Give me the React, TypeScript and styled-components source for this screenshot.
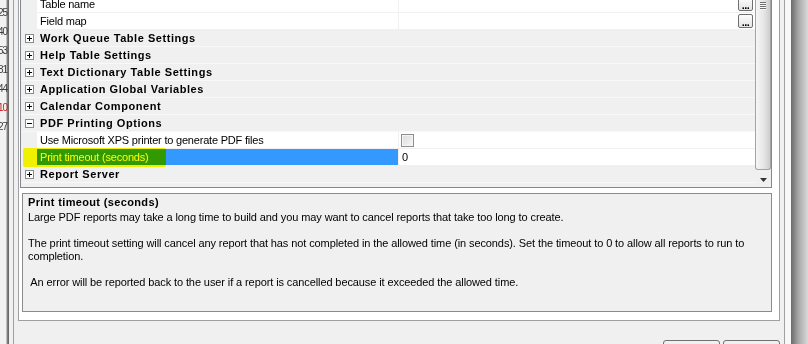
import styled, { createGlobalStyle } from 'styled-components';

const GlobalStyle = createGlobalStyle`
  html, body {
    margin: 0;
    padding: 0;
    width: 808px;
    height: 344px;
    overflow: hidden;
    background: #f0f0f0;
  }
  body {
    font-family: "Liberation Sans", Arial, sans-serif;
    font-size: 11px;
    color: #000;
  }
`;

type Row =
  | { kind: 'category'; name: string; open?: boolean }
  | {
      kind: 'property';
      name: string;
      value?: string;
      editor?: 'ellipsis' | 'checkbox';
      selected?: boolean;
      marked?: boolean;
    };

const ROWS: Row[] = [
  { kind: 'property', name: 'Table name', editor: 'ellipsis' },
  { kind: 'property', name: 'Field map', editor: 'ellipsis' },
  { kind: 'category', name: 'Work Queue Table Settings' },
  { kind: 'category', name: 'Help Table Settings' },
  { kind: 'category', name: 'Text Dictionary Table Settings' },
  { kind: 'category', name: 'Application Global Variables' },
  { kind: 'category', name: 'Calendar Component' },
  { kind: 'category', name: 'PDF Printing Options', open: true },
  { kind: 'property', name: 'Use Microsoft XPS printer to generate PDF files', editor: 'checkbox' },
  { kind: 'property', name: 'Print timeout (seconds)', value: '0', selected: true, marked: true },
  { kind: 'category', name: 'Report Server' },
];

const LINE_NUMBERS = ['25', '40', '53', '31', '44', '10', '27'];

function Expander({ open }: { open?: boolean }) {
  return (
    <ExpanderIcon width="9" height="9" viewBox="0 0 9 9">
      <rect x="0.5" y="0.5" width="8" height="8" fill="#fff" stroke="#8a8a8a" />
      <line x1="2" y1="4.5" x2="7" y2="4.5" stroke="#000" />
      {!open && <line x1="4.5" y1="2" x2="4.5" y2="7" stroke="#000" />}
    </ExpanderIcon>
  );
}

function App() {
  return (
    <>
      <GlobalStyle />
      <Screen>
        <EditorStrip>
          {LINE_NUMBERS.map((n) => (
            <LineNumber key={n} $red={n === '10'}>
              {n}
            </LineNumber>
          ))}
        </EditorStrip>

        <Dialog>
          <Panel>
            <Frame>
              <Grid>
                <GridBody>
                  <RowList>
                    {ROWS.map((row) =>
                      row.kind === 'category' ? (
                        <CategoryRow key={row.name}>
                          <MarginCell>
                            <Expander open={row.open} />
                          </MarginCell>
                          <CategoryLabel>{row.name}</CategoryLabel>
                        </CategoryRow>
                      ) : (
                        <PropertyRow key={row.name}>
                          <MarginCell />
                          <NameCell $selected={row.selected}>{row.name}</NameCell>
                          <ValueCell>
                            {row.value}
                            {row.editor === 'checkbox' && <CheckBox />}
                            {row.editor === 'ellipsis' && <EllipsisButton>...</EllipsisButton>}
                          </ValueCell>
                          {row.marked && <Highlighter />}
                        </PropertyRow>
                      ),
                    )}
                  </RowList>
                </GridBody>
                <ScrollBar>
                  <Thumb>
                    <Grip />
                  </Thumb>
                  <ArrowButton>
                    <svg width="7" height="4" viewBox="0 0 7 4">
                      <path d="M0 0 H7 L3.5 4 Z" fill="#333" />
                    </svg>
                  </ArrowButton>
                </ScrollBar>
              </Grid>

              <HelpBox>
                <HelpTitle>Print timeout (seconds)</HelpTitle>
                <HelpLine>
                  Large PDF reports may take a long time to build and you may want to cancel reports that take too
                  long to create.
                </HelpLine>
                <HelpLine />
                <HelpLine>
                  The print timeout setting will cancel any report that has not completed in the allowed time (in
                  seconds). Set the timeout to 0 to allow all reports to run to
                </HelpLine>
                <HelpLine>completion.</HelpLine>
                <HelpLine />
                <HelpLine> An error will be reported back to the user if a report is cancelled because it exceeded the allowed time.</HelpLine>
              </HelpBox>
            </Frame>

            <ButtonBar>
              <DialogButton />
              <DialogButton />
            </ButtonBar>
          </Panel>
        </Dialog>

        <WindowShadow />
      </Screen>
    </>
  );
}

const Screen = styled.div`
  display: flex;
  width: 808px;
  height: 344px;
  overflow: hidden;
`;

const EditorStrip = styled.div`
  width: 9px;
  flex-shrink: 0;
  box-sizing: border-box;
  padding: 3px 2px 0 0;
  overflow: hidden;
  background: linear-gradient(to right, #f2f2f2 0, #f2f2f2 6px, #8c8c8c 7px, #5c5c5c 9px);
`;

const LineNumber = styled.div<{ $red?: boolean }>`
  display: flex;
  justify-content: flex-end;
  height: 19px;
  line-height: 19px;
  font-size: 10px;
  letter-spacing: -1px;
  white-space: nowrap;
  color: ${({ $red }) => ($red ? '#c41a1a' : '#3c3c3c')};
`;

const Dialog = styled.div`
  flex: 1;
  display: flex;
  padding-left: 4px;
  border-right: 6px solid #f7f7f7;
  background: #f0f0f0;
`;

const Panel = styled.div`
  flex: 1;
  display: flex;
  flex-direction: column;
  padding: 0 4px;
  border-left: 1px solid #a0a0a0;
  border-right: 1px solid #a0a0a0;
`;

const Frame = styled.div`
  display: flex;
  flex-direction: column;
  padding: 0 7px 8px 1px;
  border: 1px solid #a0a0a0;
  border-top: none;
  background: #fff;
`;

const Grid = styled.div`
  display: flex;
  height: 188px;
  box-sizing: border-box;
  border: 1px solid #828790;
  border-top: none;
  background: #f0f0f0;
`;

const GridBody = styled.div`
  flex: 1;
  overflow: hidden;
`;

const RowList = styled.div`
  margin-top: -4px;
`;

const CategoryRow = styled.div`
  display: flex;
  height: 17px;
  box-sizing: border-box;
  border-bottom: 1px solid #f8f8f8;
  background: #f0f0f0;
`;

const PropertyRow = styled.div`
  position: relative;
  display: flex;
  height: 17px;
`;

const MarginCell = styled.div`
  width: 16px;
  flex-shrink: 0;
  display: flex;
  align-items: center;
  padding-left: 4px;
  box-sizing: border-box;
  background: #f0f0f0;
`;

const ExpanderIcon = styled.svg`
  display: block;
  margin-top: 1px;
`;

const CategoryLabel = styled.div`
  padding-left: 3px;
  line-height: 16px;
  font-weight: bold;
  letter-spacing: 0.55px;
  white-space: nowrap;
`;

const NameCell = styled.div<{ $selected?: boolean }>`
  width: 362px;
  flex-shrink: 0;
  box-sizing: border-box;
  padding-left: 3px;
  line-height: 16px;
  letter-spacing: -0.2px;
  white-space: nowrap;
  border-right: 1px solid #f0f0f0;
  border-bottom: 1px solid #f0f0f0;
  background: ${({ $selected }) => ($selected ? '#3399ff' : '#fff')};
  color: ${({ $selected }) => ($selected ? '#fff' : '#000')};
`;

const ValueCell = styled.div`
  flex: 1;
  display: flex;
  align-items: center;
  padding: 0 2px 0 3px;
  border-bottom: 1px solid #f0f0f0;
  background: #fff;
`;

const CheckBox = styled.span`
  width: 13px;
  height: 13px;
  margin-left: -1px;
  box-sizing: border-box;
  border: 1px solid #8e8f8f;
  background: linear-gradient(135deg, #dcdcdc, #f6f6f6);
  box-shadow: inset 0 0 0 1px #f4f4f4;
`;

const EllipsisButton = styled.span`
  width: 15px;
  height: 14px;
  margin-left: auto;
  box-sizing: border-box;
  display: flex;
  align-items: flex-end;
  justify-content: center;
  border: 1px solid #6f6f6f;
  border-radius: 2px;
  background: linear-gradient(#fdfdfd, #e4e4e4);
  font-weight: bold;
  font-size: 11px;
  line-height: 9px;
  letter-spacing: -0.5px;
`;

const Highlighter = styled.div`
  position: absolute;
  left: 2px;
  top: -1px;
  width: 143px;
  height: 19px;
  border-radius: 2px;
  background: #ffff00;
  mix-blend-mode: multiply;
  pointer-events: none;
`;

const ScrollBar = styled.div`
  width: 16px;
  display: flex;
  flex-direction: column;
  background: #ebebeb;
`;

const Thumb = styled.div`
  height: 170px;
  box-sizing: border-box;
  display: flex;
  justify-content: center;
  padding-top: 2px;
  border: 1px solid #a4a4a4;
  border-top: none;
  border-radius: 0 0 3px 3px;
  background: linear-gradient(to right, #f6f6f6, #e6e6e6 55%, #cdcdcd);
`;

const Grip = styled.div`
  width: 6px;
  height: 8px;
  background: repeating-linear-gradient(#6f6f6f 0 1px, #fafafa 1px 2px);
`;

const ArrowButton = styled.div`
  flex: 1;
  display: flex;
  align-items: center;
  justify-content: center;
  padding-top: 2px;
  background: #f0f0f0;
`;

const HelpBox = styled.div`
  height: 119px;
  margin: 5px 0 0 2px;
  box-sizing: border-box;
  padding: 1px 5px;
  border: 1px solid #8c8c8c;
  background: #f0f0f0;
`;

const HelpTitle = styled.div`
  line-height: 14px;
  margin-bottom: 2px;
  font-weight: bold;
  letter-spacing: 0.35px;
`;

const HelpLine = styled.div`
  height: 13px;
  line-height: 13px;
  white-space: pre;
  letter-spacing: -0.1px;
`;

const ButtonBar = styled.div`
  display: flex;
  justify-content: flex-end;
  gap: 3px;
  margin-top: 19px;
`;

const DialogButton = styled.button`
  width: 57px;
  height: 23px;
  flex-shrink: 0;
  border: 1px solid #707070;
  border-radius: 3px;
  background: linear-gradient(#f2f2f2, #dcdcdc);
`;

const WindowShadow = styled.div`
  width: 17px;
  flex-shrink: 0;
  background: linear-gradient(to right, #6a6a6a, #a8a8a8 45%, #dadada);
`;

export default App;
